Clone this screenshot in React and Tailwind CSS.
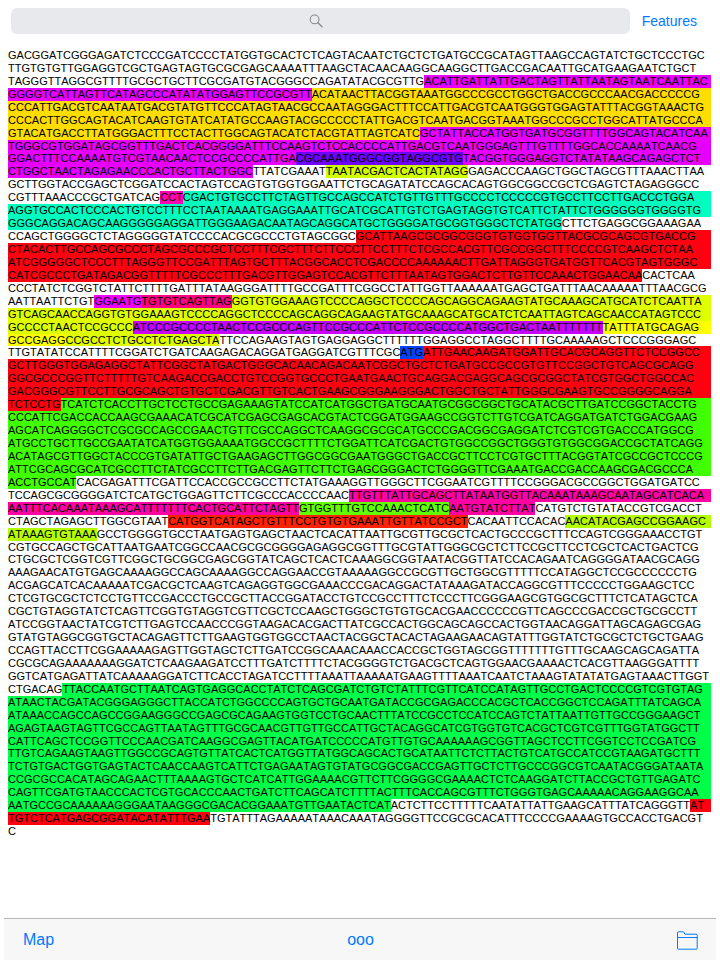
import React from "react";

const COLORS = {
  plain: "",
  magenta: "bg-[#e800ff]",
  gold: "bg-[#ffdd00]",
  violet: "bg-[#6e00ff]",
  lime: "bg-[#d0ff00]",
  rose: "bg-[#ff00b4]",
  teal: "bg-[#00ffbf]",
  red: "bg-[#ff0011]",
  fuchsia: "bg-[#f000ff]",
  crimson: "bg-[#ff0080]",
  citron: "bg-[#dfff00]",
  purple: "bg-[#c800ff]",
  yellow: "bg-[#ffff00]",
  blue: "bg-[#0044ff]",
  green: "bg-[#40ff00]",
  pink: "bg-[#ff00a2]",
  leaf: "bg-[#62ff00]",
  scarlet: "bg-[#ff2200]",
  chartreuse: "bg-[#b4ff00]",
  emerald: "bg-[#00ff48]",
};

// Each line is a list of "colour:bases" segments separated by blanks.
const LINES = [
  "plain:GACGGATCGGGAGATCTCCCGATCCCCTATGGTGCACTCTCAGTACAATCTGCTCTGATGCCGCATAGTTAAGCCAGTATCTGCTCCCTGC",
  "plain:TTGTGTGTTGGAGGTCGCTGAGTAGTGCGCGAGCAAAATTTAAGCTACAACAAGGCAAGGCTTGACCGACAATTGCATGAAGAATCTGCT",
  "plain:TAGGGTTAGGCGTTTTGCGCTGCTTCGCGATGTACGGGCCAGATATACGCGTTG magenta:ACATTGATTATTGACTAGTTATTAATAGTAATCAATTAC",
  "magenta:GGGGTCATTAGTTCATAGCCCATATATGGAGTTCCGCGTT gold:ACATAACTTACGGTAAATGGCCCGCCTGGCTGACCGCCCAACGACCCCCG",
  "gold:CCCATTGACGTCAATAATGACGTATGTTCCCATAGTAACGCCAATAGGGACTTTCCATTGACGTCAATGGGTGGAGTATTTACGGTAAACTG",
  "gold:CCCACTTGGCAGTACATCAAGTGTATCATATGCCAAGTACGCCCCCTATTGACGTCAATGACGGTAAATGGCCCGCCTGGCATTATGCCCA",
  "gold:GTACATGACCTTATGGGACTTTCCTACTTGGCAGTACATCTACGTATTAGTCATC magenta:GCTATTACCATGGTGATGCGGTTTTGGCAGTACATCAA",
  "magenta:TGGGCGTGGATAGCGGTTTGACTCACGGGGATTTCCAAGTCTCCACCCCATTGACGTCAATGGGAGTTTGTTTTGGCACCAAAATCAACG",
  "magenta:GGACTTTCCAAAATGTCGTAACAACTCCGCCCCATTGA violet:CGCAAATGGGCGGTAGGCGTG magenta:TACGGTGGGAGGTCTATATAAGCAGAGCTCT",
  "magenta:CTGGCTAACTAGAGAACCCACTGCTTACTGGC plain:TTATCGAAAT lime:TAATACGACTCACTATAGG plain:GAGACCCAAGCTGGCTAGCGTTTAAACTTAA",
  "plain:GCTTGGTACCGAGCTCGGATCCACTAGTCCAGTGTGGTGGAATTCTGCAGATATCCAGCACAGTGGCGGCCGCTCGAGTCTAGAGGGCC",
  "plain:CGTTTAAACCCGCTGATCAG rose:CCT teal:CGACTGTGCCTTCTAGTTGCCAGCCATCTGTTGTTTGCCCCTCCCCCGTGCCTTCCTTGACCCTGGA",
  "teal:AGGTGCCACTCCCACTGTCCTTTCCTAATAAAATGAGGAAATTGCATCGCATTGTCTGAGTAGGTGTCATTCTATTCTGGGGGGTGGGGTG",
  "teal:GGGCAGGACAGCAAGGGGGAGGATTGGGAAGACAATAGCAGGCATGCTGGGGATGCGGTGGGCTCTATGG plain:CTTCTGAGGCGGAAAGAA",
  "plain:CCAGCTGGGGCTCTAGGGGGTATCCCCACGCGCCCTGTAGCGGC red:GCATTAAGCGCGGCGGGTGTGGTGGTTACGCGCAGCGTGACCG",
  "red:CTACACTTGCCAGCGCCCTAGCGCCCGCTCCTTTCGCTTTCTTCCCTTCCTTTCTCGCCACGTTCGCCGGCTTTCCCCGTCAAGCTCTAA",
  "red:ATCGGGGGCTCCCTTTAGGGTTCCGATTTAGTGCTTTACGGCACCTCGACCCCAAAAAACTTGATTAGGGTGATGGTTCACGTAGTGGGC",
  "red:CATCGCCCTGATAGACGGTTTTTCGCCCTTTGACGTTGGAGTCCACGTTCTTTAATAGTGGACTCTTGTTCCAAACTGGAACAA plain:CACTCAA",
  "plain:CCCTATCTCGGTCTATTCTTTTGATTTATAAGGGATTTTGCCGATTTCGGCCTATTGGTTAAAAAATGAGCTGATTTAACAAAAATTTAACGCG",
  "plain:AATTAATTCTGT fuchsia:GGAATG crimson:TGTGTCAGTTAG citron:GGTGTGGAAAGTCCCCAGGCTCCCCAGCAGGCAGAAGTATGCAAAGCATGCATCTCAATTA",
  "citron:GTCAGCAACCAGGTGTGGAAAGTCCCCAGGCTCCCCAGCAGGCAGAAGTATGCAAAGCATGCATCTCAATTAGTCAGCAACCATAGTCCC",
  "citron:GCCCCTAACTCCGCCC purple:ATCCCGCCCCTAACTCCGCCCAGTTCCGCCCATTCTCCGCCCCATGGCTGACTAATTTTTTT yellow:TATTTATGCAGAG",
  "yellow:GCCGAGG citron:CCGCCTCTGCCTCTGAGCTA plain:TTCCAGAAGTAGTGAGGAGGCTTTTTTGGAGGCCTAGGCTTTTGCAAAAAGCTCCCGGGAGC",
  "plain:TTGTATATCCATTTTCGGATCTGATCAAGAGACAGGATGAGGATCGTTTCGC blue:ATG red:ATTGAACAAGATGGATTGCACGCAGGTTCTCCGGCC",
  "red:GCTTGGGTGGAGAGGCTATTCGGCTATGACTGGGCACAACAGACAATCGGCTGCTCTGATGCCGCCGTGTTCCGGCTGTCAGCGCAGG",
  "red:GGCGCCCGGTTCTTTTTGTCAAGACCGACCTGTCCGGTGCCCTGAATGAACTGCAGGACGAGGCAGCGCGGCTATCGTGGCTGGCCAC",
  "red:GACGGGCGTTCCTTGCGCAGCTGTGCTCGACGTTGTCACTGAAGCGGGAAGGGACTGGCTGCTATTGGGCGAAGTGCCGGGGCAGGA",
  "red:TCTCCTG green:TCATCTCACCTTGCTCCTGCCGAGAAAGTATCCATCATGGCTGATGCAATGCGGCGGCTGCATACGCTTGATCCGGCTACCTG",
  "green:CCCATTCGACCACCAAGCGAAACATCGCATCGAGCGAGCACGTACTCGGATGGAAGCCGGTCTTGTCGATCAGGATGATCTGGACGAAG",
  "green:AGCATCAGGGGCTCGCGCCAGCCGAACTGTTCGCCAGGCTCAAGGCGCGCATGCCCGACGGCGAGGATCTCGTCGTGACCCATGGCG",
  "green:ATGCCTGCTTGCCGAATATCATGGTGGAAAATGGCCGCTTTTCTGGATTCATCGACTGTGGCCGGCTGGGTGTGGCGGACCGCTATCAGG",
  "green:ACATAGCGTTGGCTACCCGTGATATTGCTGAAGAGCTTGGCGGCGAATGGGCTGACCGCTTCCTCGTGCTTTACGGTATCGCCGCTCCCG",
  "green:ATTCGCAGCGCATCGCCTTCTATCGCCTTCTTGACGAGTTCTTCTGAGCGGGACTCTGGGGTTCGAAATGACCGACCAAGCGACGCCCA",
  "green:ACCTGCCAT plain:CACGAGATTTCGATTCCACCGCCGCCTTCTATGAAAGGTTGGGCTTCGGAATCGTTTTCCGGGACGCCGGCTGGATGATCC",
  "plain:TCCAGCGCGGGGATCTCATGCTGGAGTTCTTCGCCCACCCCAAC pink:TTGTTTATTGCAGCTTATAATGGTTACAAATAAAGCAATAGCATCACA",
  "pink:AATTTCACAAATAAAGCATTTTTTTCACTGCATTCTAGTT leaf:GTGGTTTGTCCAAACTCATC pink:AATGTATCTTAT plain:CATGTCTGTATACCGTCGACCT",
  "plain:CTAGCTAGAGCTTGGCGTAAT scarlet:CATGGTCATAGCTGTTTCCTGTGTGAAATTGTTATCCGCT plain:CACAATTCCACAC chartreuse:AACATACGAGCCGGAAGC",
  "chartreuse:ATAAAGTGTAAA plain:GCCTGGGGTGCCTAATGAGTGAGCTAACTCACATTAATTGCGTTGCGCTCACTGCCCGCTTTCCAGTCGGGAAACCTGT",
  "plain:CGTGCCAGCTGCATTAATGAATCGGCCAACGCGCGGGGAGAGGCGGTTTGCGTATTGGGCGCTCTTCCGCTTCCTCGCTCACTGACTCG",
  "plain:CTGCGCTCGGTCGTTCGGCTGCGGCGAGCGGTATCAGCTCACTCAAAGGCGGTAATACGGTTATCCACAGAATCAGGGGATAACGCAGG",
  "plain:AAAGAACATGTGAGCAAAAGGCCAGCAAAAGGCCAGGAACCGTAAAAAGGCCGCGTTGCTGGCGTTTTTCCATAGGCTCCGCCCCCCTG",
  "plain:ACGAGCATCACAAAAATCGACGCTCAAGTCAGAGGTGGCGAAACCCGACAGGACTATAAAGATACCAGGCGTTTCCCCCTGGAAGCTCC",
  "plain:CTCGTGCGCTCTCCTGTTCCGACCCTGCCGCTTACCGGATACCTGTCCGCCTTTCTCCCTTCGGGAAGCGTGGCGCTTTCTCATAGCTCA",
  "plain:CGCTGTAGGTATCTCAGTTCGGTGTAGGTCGTTCGCTCCAAGCTGGGCTGTGTGCACGAACCCCCCGTTCAGCCCGACCGCTGCGCCTT",
  "plain:ATCCGGTAACTATCGTCTTGAGTCCAACCCGGTAAGACACGACTTATCGCCACTGGCAGCAGCCACTGGTAACAGGATTAGCAGAGCGAG",
  "plain:GTATGTAGGCGGTGCTACAGAGTTCTTGAAGTGGTGGCCTAACTACGGCTACACTAGAAGAACAGTATTTGGTATCTGCGCTCTGCTGAAG",
  "plain:CCAGTTACCTTCGGAAAAAGAGTTGGTAGCTCTTGATCCGGCAAACAAACCACCGCTGGTAGCGGTTTTTTTGTTTGCAAGCAGCAGATTA",
  "plain:CGCGCAGAAAAAAAGGATCTCAAGAAGATCCTTTGATCTTTTCTACGGGGTCTGACGCTCAGTGGAACGAAAACTCACGTTAAGGGATTTT",
  "plain:GGTCATGAGATTATCAAAAAGGATCTTCACCTAGATCCTTTTAAATTAAAAATGAAGTTTTAAATCAATCTAAAGTATATATGAGTAAACTTGGT",
  "plain:CTGACAG emerald:TTACCAATGCTTAATCAGTGAGGCACCTATCTCAGCGATCTGTCTATTTCGTTCATCCATAGTTGCCTGACTCCCCGTCGTGTAG",
  "emerald:ATAACTACGATACGGGAGGGCTTACCATCTGGCCCCAGTGCTGCAATGATACCGCGAGACCCACGCTCACCGGCTCCAGATTTATCAGCA",
  "emerald:ATAAACCAGCCAGCCGGAAGGGCCGAGCGCAGAAGTGGTCCTGCAACTTTATCCGCCTCCATCCAGTCTATTAATTGTTGCCGGGAAGCT",
  "emerald:AGAGTAAGTAGTTCGCCAGTTAATAGTTTGCGCAACGTTGTTGCCATTGCTACAGGCATCGTGGTGTCACGCTCGTCGTTTGGTATGGCTT",
  "emerald:CATTCAGCTCCGGTTCCCAACGATCAAGGCGAGTTACATGATCCCCCATGTTGTGCAAAAAAGCGGTTAGCTCCTTCGGTCCTCCGATCG",
  "emerald:TTGTCAGAAGTAAGTTGGCCGCAGTGTTATCACTCATGGTTATGGCAGCACTGCATAATTCTCTTACTGTCATGCCATCCGTAAGATGCTTT",
  "emerald:TCTGTGACTGGTGAGTACTCAACCAAGTCATTCTGAGAATAGTGTATGCGGCGACCGAGTTGCTCTTGCCCGGCGTCAATACGGGATAATA",
  "emerald:CCGCGCCACATAGCAGAACTTTAAAAGTGCTCATCATTGGAAAACGTTCTTCGGGGCGAAAACTCTCAAGGATCTTACCGCTGTTGAGATC",
  "emerald:CAGTTCGATGTAACCCACTCGTGCACCCAACTGATCTTCAGCATCTTTTACTTTCACCAGCGTTTCTGGGTGAGCAAAAACAGGAAGGCAA",
  "emerald:AATGCCGCAAAAAAGGGAATAAGGGCGACACGGAAATGTTGAATACTCAT plain:ACTCTTCCTTTTTCAATATTATTGAAGCATTTATCAGGGTT red:AT",
  "red:TGTCTCATGAGCGGATACATATTTGAA plain:TGTATTTAGAAAAATAAACAAATAGGGGTTCCGCGCACATTTCCCCGAAAAGTGCCACCTGACGT",
  "plain:C",
];

function SearchBar() {
  return (
    <header className="flex items-center pt-2 pl-[11px] pr-[23px]">
      <div className="relative flex-1">
        <input
          type="search"
          aria-label="Search sequence"
          className="block h-[26px] w-full rounded-md bg-[#e8e9ec] px-3 text-sm outline-none"
        />
        <svg
          viewBox="0 0 14 14"
          className="pointer-events-none absolute inset-y-0 right-2 left-0 m-auto size-[14px]"
          fill="none"
          stroke="#8a8a8f"
          strokeLinecap="round"
          aria-hidden="true"
        >
          <circle cx="5.6" cy="5.4" r="4.4" strokeWidth="1.1" />
          <path d="M8.9 8.7 13 12.8" strokeWidth="1.5" />
        </svg>
      </div>
      <button type="button" className="ml-3 text-sm leading-[26px] text-[#007aff]">
        Features
      </button>
    </header>
  );
}

function SequenceLine({ line }) {
  const segments = line.split(" ").map((part) => part.split(":"));
  return (
    <div className="flex whitespace-nowrap">
      {segments.map(([color, bases], i) => (
        <span key={i} className={`${COLORS[color]} last:flex-1`}>
          {bases}
        </span>
      ))}
    </div>
  );
}

function Toolbar() {
  return (
    <footer className="mx-1 grid h-[42px] grid-cols-3 items-center border-t border-[#b8b8b8] bg-[#f7f7f7] pt-px pr-[18px] pl-[19px] text-base text-[#007aff]">
      <button type="button" className="justify-self-start">
        Map
      </button>
      <button type="button" className="justify-self-center">
        ooo
      </button>
      <button type="button" aria-label="Open folder" className="justify-self-end">
        <svg viewBox="0 0 21 19" className="block h-[19px] w-[21px]" fill="none" stroke="#007aff" strokeLinejoin="round">
          <path d="M.5 17.5V2Q.5.8 1.7.8H6Q7 .8 7.3 1.8L7.8 3.2H19Q20.2 3.2 20.2 4.4V17.5Q20.2 18.2 19.5 18.2H1.2Q.5 18.2.5 17.5Z" />
          <path d="M.5 6.5H20.2" />
        </svg>
      </button>
    </footer>
  );
}

export default function App() {
  return (
    <div className="flex min-h-screen flex-col bg-white font-['Liberation_Sans',Arial,sans-serif] text-black">
      <SearchBar />
      <main className="mt-[15px] mb-20 grid flex-1 auto-rows-fr pr-[9px] pl-2 text-[11px] leading-3 [font-kerning:none]">
        {LINES.map((line, i) => (
          <SequenceLine key={i} line={line} />
        ))}
      </main>
      <Toolbar />
    </div>
  );
}
